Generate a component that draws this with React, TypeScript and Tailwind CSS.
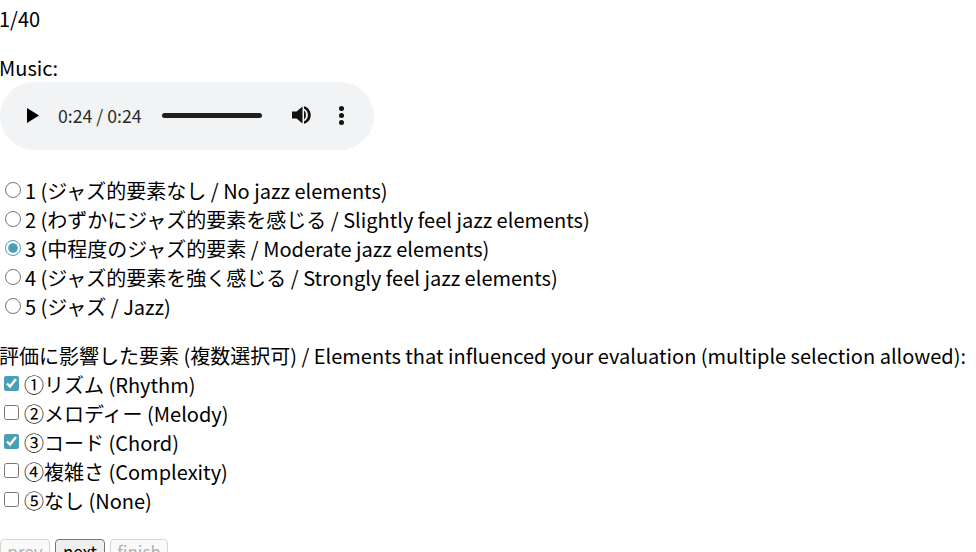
const font = "font-['Noto_Sans_CJK_JP','Noto_Sans',sans-serif]";

const levels = [
  "1 (ジャズ的要素なし / No jazz elements)",
  "2 (わずかにジャズ的要素を感じる / Slightly feel jazz elements)",
  "3 (中程度のジャズ的要素 / Moderate jazz elements)",
  "4 (ジャズ的要素を強く感じる / Strongly feel jazz elements)",
  "5 (ジャズ / Jazz)",
];

const elements = [
  { label: "①リズム (Rhythm)", checked: true },
  { label: "②メロディー (Melody)", checked: false },
  { label: "③コード (Chord)", checked: true },
  { label: "④複雑さ (Complexity)", checked: false },
  { label: "⑤なし (None)", checked: false },
];

function AudioBar() {
  return (
    <div className="flex items-center w-[374px] h-[68px] rounded-[34px] bg-[#f1f3f4]">
      <svg className="ml-[27px] w-3 h-[15px] -translate-y-px" viewBox="0 0 12 15">
        <path d="M0 0L12 7.5L0 15Z" fill="#000" />
      </svg>
      <span className="ml-[19px] w-[84px] text-[17.7px] leading-none whitespace-nowrap text-[#2b2b2b]">0:24 / 0:24</span>
      <div className="ml-[20px] w-[100px] h-[5px] rounded-full bg-[#1f1f1f] -translate-y-px" />
      <svg className="ml-[30px] w-5 h-5 -translate-y-px" viewBox="0 0 20 20">
        <path d="M0 6.5H4.5L10.5 1.5V18.5L4.5 13.5H0Z" fill="#111" />
        <path d="M12 5.5C14.5 7 14.5 13 12 14.5Z" fill="#111" />
        <path d="M12 1.2C21 3.5 21 16.5 12 18.8V16.3C17.2 14.5 17.2 5.5 12 3.7Z" fill="#111" />
      </svg>
      <div className="ml-[27px] flex flex-col gap-[2px] -translate-y-px">
        <div className="w-[5px] h-[5px] rounded-full bg-[#111]" />
        <div className="w-[5px] h-[5px] rounded-full bg-[#111]" />
        <div className="w-[5px] h-[5px] rounded-full bg-[#111]" />
      </div>
    </div>
  );
}

export default function App() {
  return (
    <div className={`${font} h-[552px] overflow-hidden bg-white text-black text-[20px] leading-[29px]`}>
      <p className="pt-[4px] -ml-px">1/40</p>
      <p className="mt-[20px] -ml-px">Music:</p>
      <AudioBar />

      <div className="mt-[26px]">
        {levels.map((text, i) => (
          <label key={text} className="flex items-center h-[29px] whitespace-nowrap">
            <input
              type="radio"
              name="level"
              defaultChecked={i === 2}
              className="ml-[5px] mr-[4px] w-4 h-4 -translate-y-px accent-[#4a9fb5]"
            />
            {text}
          </label>
        ))}
      </div>

      <p className="mt-[20px] -ml-px whitespace-nowrap">
        評価に影響した要素 (複数選択可) / Elements that influenced your evaluation (multiple selection allowed):
      </p>
      <div>
        {elements.map((item) => (
          <label key={item.label} className="flex items-center h-[29px] whitespace-nowrap">
            <input
              type="checkbox"
              defaultChecked={item.checked}
              className="ml-[4px] mr-[5px] w-[15px] h-[15px] -translate-y-px accent-[#4a9fb5]"
            />
            {item.label}
          </label>
        ))}
      </div>

      <div className="mt-[24px] flex gap-[5px] text-[17px] leading-[22px]">
        <button disabled className="w-[50px] h-[29px] pb-[3px] rounded-[4px] border border-[#d6d6d6] bg-[#fafafa] text-[#b0b0b0]">prev</button>
        <button className="w-[50px] h-[29px] pb-[3px] rounded-[4px] border border-[#767676] bg-[#efefef] text-black">next</button>
        <button disabled className="w-[58px] h-[29px] pb-[3px] rounded-[4px] border border-[#d6d6d6] bg-[#fafafa] text-[#b0b0b0]">finish</button>
      </div>
    </div>
  );
}
